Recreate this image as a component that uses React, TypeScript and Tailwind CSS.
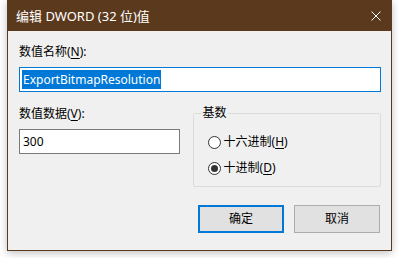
import React from "react";

const font = { fontFamily: '"Noto Sans", "Noto Sans CJK SC", sans-serif' };

function U({ children }: { children: React.ReactNode }) {
  return <span className="underline underline-offset-2">{children}</span>;
}

function Radio({ checked, children }: { checked?: boolean; children: React.ReactNode }) {
  return (
    <div className="flex items-center h-[16px]">
      <div className="w-[13px] h-[13px] rounded-full border border-[#333] bg-white flex items-center justify-center">
        {checked && <div className="w-[7px] h-[7px] rounded-full bg-[#333]" />}
      </div>
      <span className="ml-[3px]">{children}</span>
    </div>
  );
}

export default function App() {
  return (
    <div className="w-[399px] h-[258px] bg-white text-[12px] leading-[16px] text-black" style={font}>
      <div className="ml-[7px] w-[385px] h-[251px] flex flex-col border-x border-b border-[#5b391c] bg-[#f0f0f0] shadow-[0_2px_8px_rgba(0,0,0,0.25)]">
        {/* title bar */}
        <div className="h-[31px] -mx-px bg-[#5b391c] text-white flex items-center justify-between pl-[9px] pr-[10px]">
          <span className="text-[13px]">编辑 DWORD (32 位)值</span>
          <svg width="10" height="10" viewBox="0 0 10 10" className="mr-[1px]">
            <path d="M0.5 0.5 L9.5 9.5 M9.5 0.5 L0.5 9.5" stroke="white" strokeWidth="1" />
          </svg>
        </div>

        <div className="pl-[11px] pr-[10px] pt-[13px]">
          <div>
            数值名称(<U>N</U>):
          </div>
          <div className="mt-[7px] h-[25px] w-[362px] border border-[#0078d7] bg-white flex items-center pl-[2px]">
            <span className="bg-[#0078d7] text-white leading-[19px] px-[1px]">ExportBitmapResolution</span>
          </div>

          <div className="flex mt-[14px]">
            <div className="w-[161px]">
              <div>
                数值数据(<U>V</U>):
              </div>
              <div className="mt-[7px] h-[25px] border border-[#7a7a7a] bg-white flex items-center pl-[3px]">
                300
              </div>
            </div>
            <div className="relative ml-[13px] mt-[7px] w-[189px] h-[74px] border border-[#dcdcdc] rounded-[2px]">
              <span className="absolute left-[8px] -top-[9px] bg-[#f0f0f0] px-px">基数</span>
              <div className="pl-[14px] pt-[20px] flex flex-col gap-[10px]">
                <Radio>
                  十六进制(<U>H</U>)
                </Radio>
                <Radio checked>
                  十进制(<U>D</U>)
                </Radio>
              </div>
            </div>
          </div>

          <div className="flex justify-end gap-[10px] mt-[18px] pr-[1px]">
            <button className="w-[86px] h-[28px] border-2 border-[#0078d7] bg-[#e1e1e1]">确定</button>
            <button className="w-[86px] h-[28px] border border-[#adadad] bg-[#e1e1e1]">取消</button>
          </div>
        </div>
      </div>
    </div>
  );
}
